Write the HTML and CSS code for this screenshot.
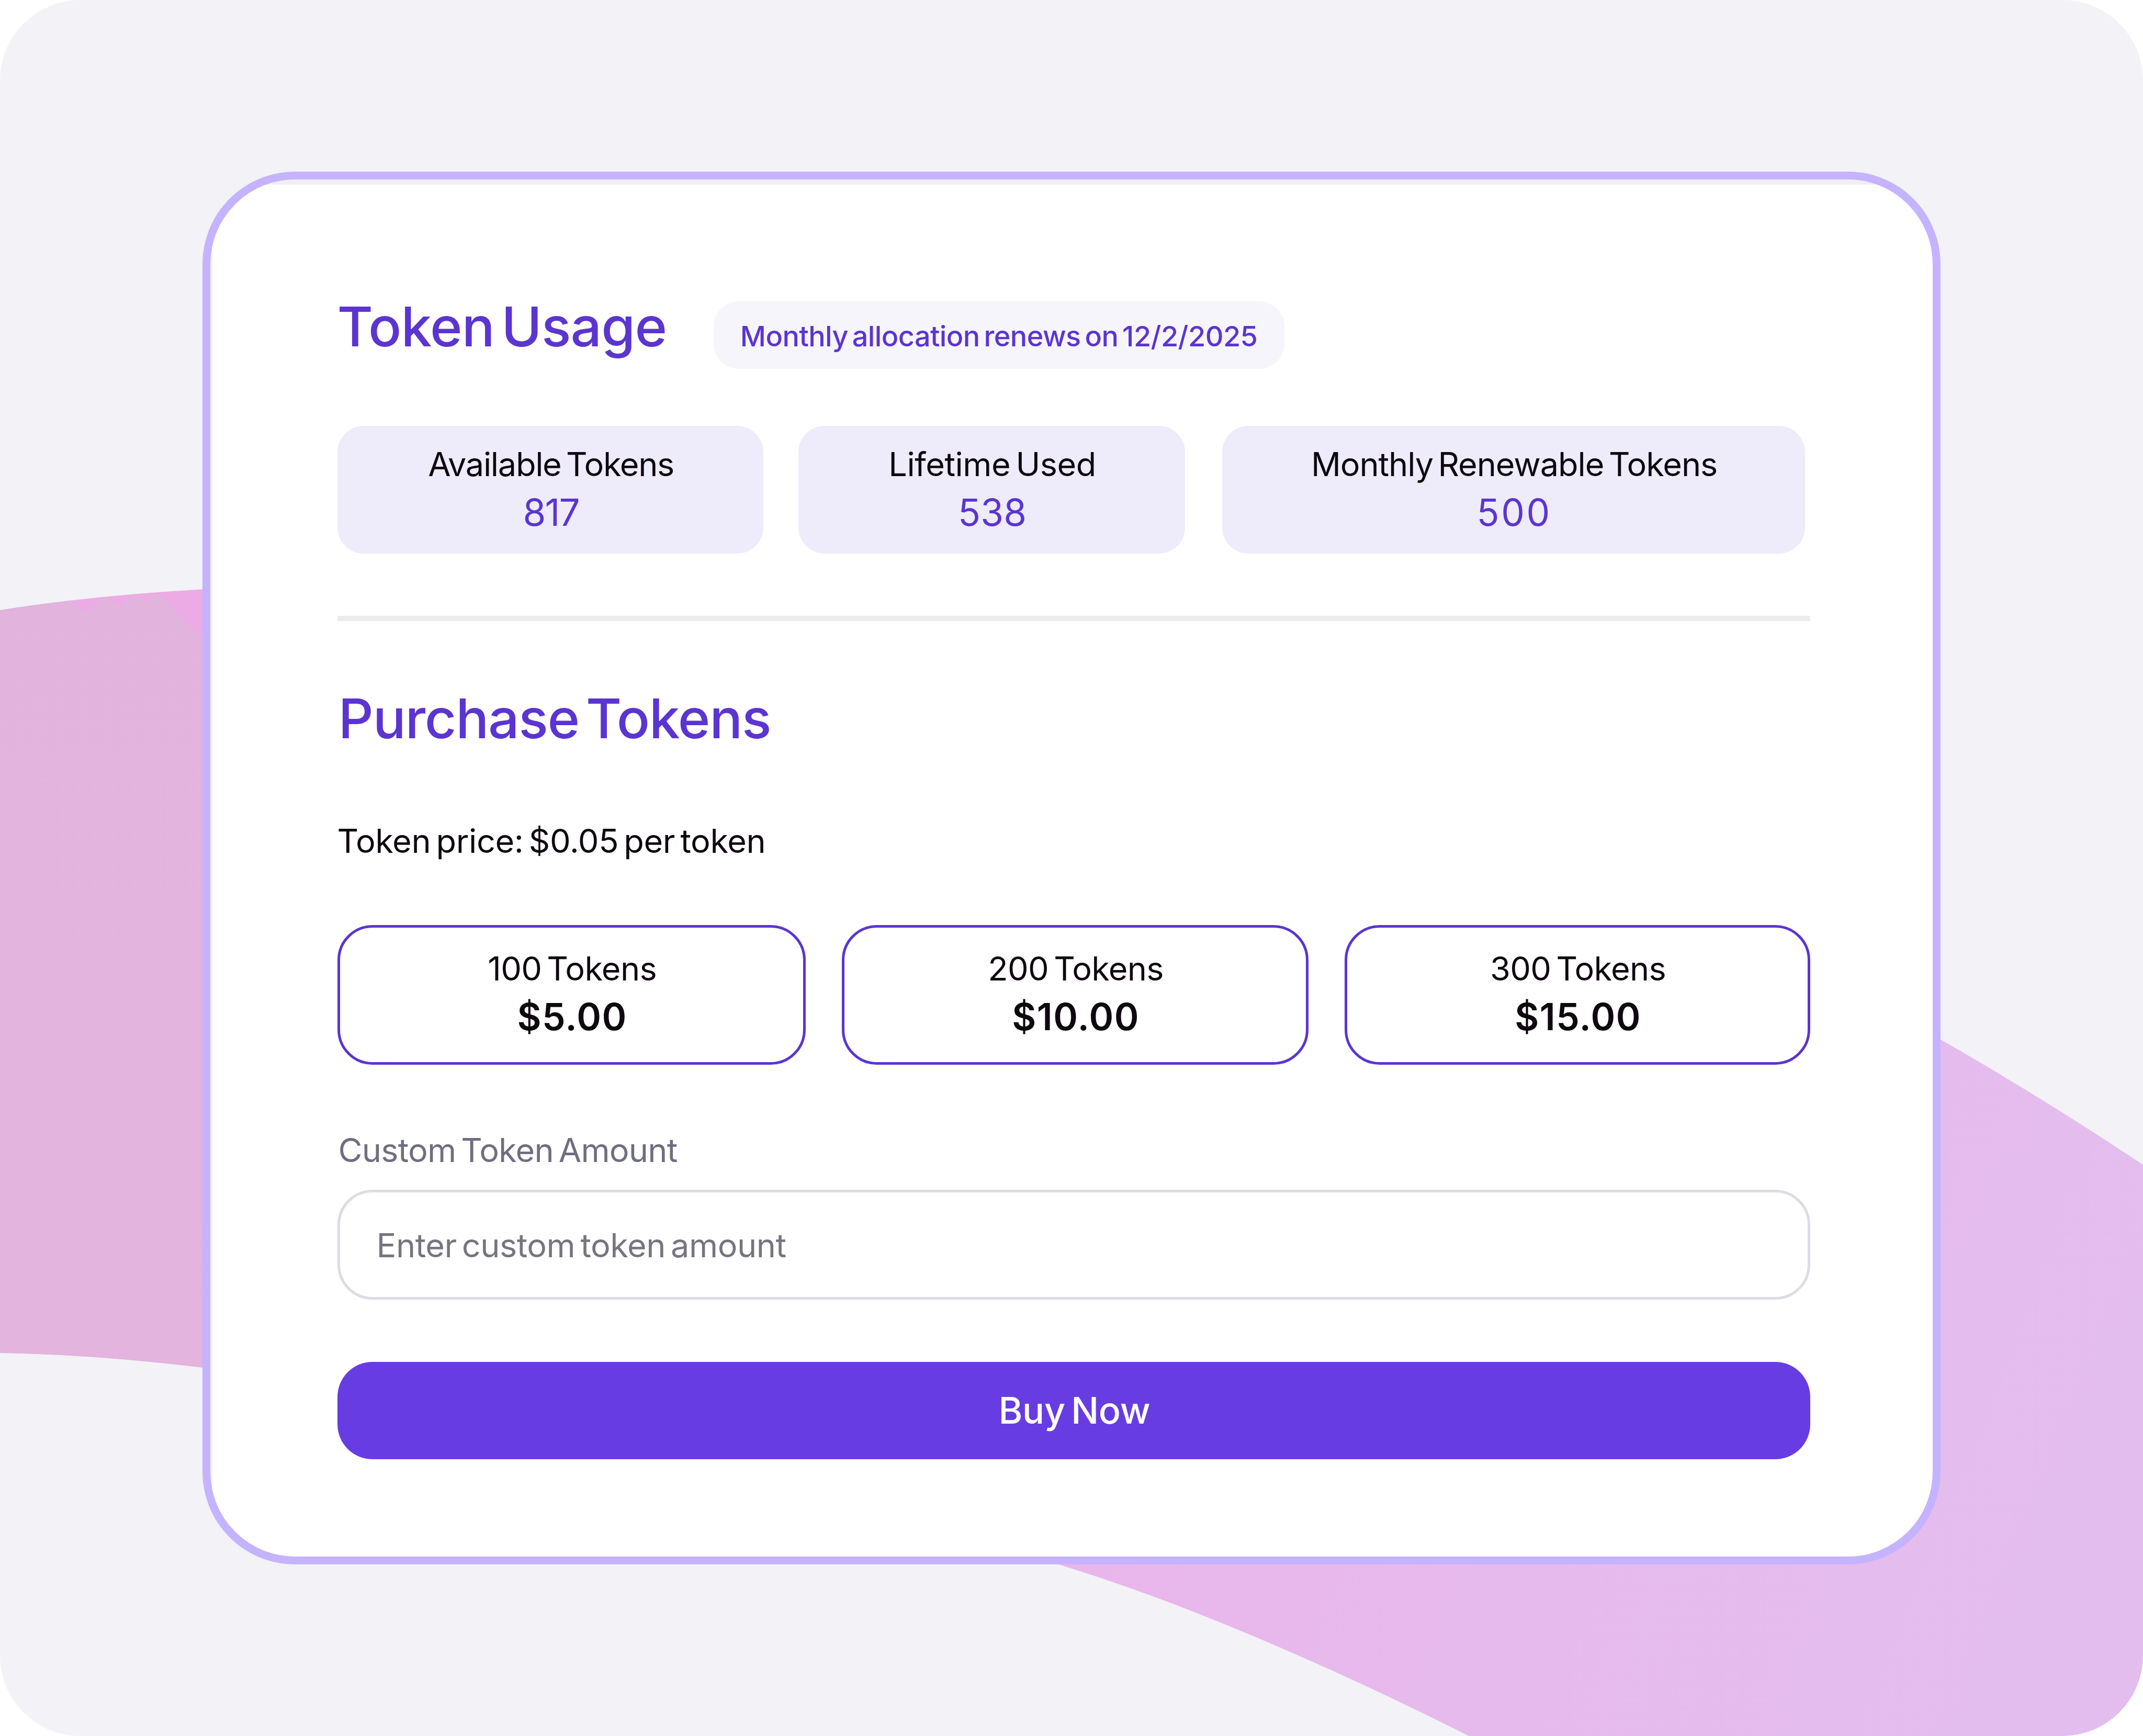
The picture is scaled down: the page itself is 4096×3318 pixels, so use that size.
FILE: index.html
```html
<!DOCTYPE html>
<html lang="en">
<head>
    <meta charset="UTF-8">
    <meta name="viewport" content="width=device-width, initial-scale=1.0">
    <title>Token Usage</title>
    <link rel="stylesheet" href="styles.css">
</head>
<body>
    <div class="page">
        <svg class="backdrop" viewBox="0 0 6400 5184" preserveAspectRatio="none" aria-hidden="true">
            <defs>
                <linearGradient id="leftFill" x1="0" y1="0" x2="0" y2="1">
                    <stop offset="0" stop-color="#e1b3dd"/>
                    <stop offset="1" stop-color="#e3b4de"/>
                </linearGradient>
                <linearGradient id="rightFill" gradientUnits="userSpaceOnUse" x1="3500" y1="4000" x2="6000" y2="5000">
                    <stop offset="0" stop-color="#e9b6ea"/>
                    <stop offset="0.5" stop-color="#e6baec"/>
                    <stop offset="1" stop-color="#e4bdef"/>
                </linearGradient>
            </defs>
            <path fill="#ecabe4" d="M0 1822 Q300 1775 640 1758 V4088 Q300 4045 0 4040 Z"/>
            <path fill="url(#leftFill)" d="M0 1822 Q100 1806 215 1793 Q240 1825 262 1824 C285 1815 295 1785 320 1784 C335 1785 345 1812 358 1812 C375 1808 385 1778 405 1777 C415 1778 423 1798 432 1798 C445 1792 450 1774 465 1773 C505 1780 550 1870 604 1900 L640 1930 V4088 Q300 4045 0 4040 Z"/>
            <path fill="url(#rightFill)" d="M5780 3095 Q6100 3278 6400 3478 V5184 H4387 Q3680 4830 3163 4672 L3100 4600 L5700 4600 Z"/>
        </svg>

        <main class="card">
            <div class="usage-header">
                <h1>Token Usage</h1>
                <span class="renew-badge">Monthly allocation renews on 12/2/2025</span>
            </div>

            <div class="stats">
                <div class="stat">
                    <div class="label available">Available Tokens</div>
                    <div class="value narrow">817</div>
                </div>
                <div class="stat">
                    <div class="label lifetime">Lifetime Used</div>
                    <div class="value">538</div>
                </div>
                <div class="stat">
                    <div class="label monthly">Monthly Renewable Tokens</div>
                    <div class="value wide">500</div>
                </div>
            </div>

            <hr>

            <h2>Purchase Tokens</h2>
            <p class="token-price">Token price: $0.05 per token</p>

            <div class="options">
                <button class="option">
                    <span class="label">100 Tokens</span>
                    <span class="price">$5.00</span>
                </button>
                <button class="option">
                    <span class="label">200 Tokens</span>
                    <span class="price">$10.00</span>
                </button>
                <button class="option">
                    <span class="label">300 Tokens</span>
                    <span class="price">$15.00</span>
                </button>
            </div>

            <label class="custom-label" for="customAmount">Custom Token Amount</label>
            <input type="text" id="customAmount" placeholder="Enter custom token amount">
            <button class="btn-buy">Buy Now</button>
        </main>
    </div>
</body>
</html>
```
FILE: styles.css
```css
* {
    box-sizing: border-box;
}
body {
    margin: 0;
    background-color: #ffffff;
    font-family: Inter, sans-serif;
    font-size: 63px;
    line-height: 92px;
    color: #0e080f;
}
.page {
    position: relative;
    width: 4096px;
    height: 3318px;
    padding: 328px 0 0 386.6px;
    background-color: #f2f2f7;
    border-radius: 154px;
    overflow: hidden;
}
.backdrop {
    position: absolute;
    top: 0;
    left: 0;
    width: 100%;
    height: 100%;
}
.card {
    position: relative;
    display: flex;
    flex-direction: column;
    width: 3322.7px;
    height: 2662px;
    padding: 233px 234px 0 243px;
    background-color: #ffffff;
    /* thin grey edge along the top and left */
    background-image: linear-gradient(#f0eff4, #f0eff4), linear-gradient(#f0eff4, #f0eff4);
    background-size: 100% 10px, 4px 100%;
    background-repeat: no-repeat;
    border: 15.4px solid #c5b3ff;
    border-radius: 177px;
}
h1, h2 {
    margin: 0;
    font-size: 105px;
    font-weight: 500;
    line-height: 96px;
    word-spacing: -14px;
    color: #5b35d0;
}
h1 {
    width: 719px;
    letter-spacing: -0.9px;
}
h2 {
    margin-top: 138px;
    padding-left: 2px;
    letter-spacing: -1.3px;
}
.usage-header {
    display: flex;
    align-items: flex-start;
}
.renew-badge {
    width: 1091px;
    height: 129px;
    border-radius: 48px;
    background-color: #f6f5fc;
    color: #5b35d0;
    font-size: 54px;
    font-weight: 500;
    line-height: 134px;
    letter-spacing: -0.6px;
    word-spacing: -6px;
    text-align: center;
    white-space: nowrap;
}
.stats {
    display: grid;
    grid-template-columns: 814px 739px 1114px;
    gap: 67px;
    margin-top: 109px;
}
.stat {
    height: 244px;
    padding: 27px 0 0 3px;
    border-radius: 50px;
    background-color: #eeebfa;
    text-align: center;
}
.stat:last-child {
    position: relative;
    left: 4px;
}
.label {
    display: block;
    letter-spacing: -0.7px;
    word-spacing: -7px;
}
.label.available {
    letter-spacing: -1.3px;
}
.label.lifetime {
    letter-spacing: -0.5px;
}
.label.monthly {
    letter-spacing: -1.1px;
}
.value {
    font-size: 71px;
    color: #5b35d0;
}
.value.narrow {
    letter-spacing: -2px;
}
.value.wide {
    letter-spacing: 3.5px;
}
hr {
    width: 100%;
    height: 10px;
    margin: 119px 0 0;
    border: none;
    background-color: #ececee;
}
.token-price {
    margin: 140px 0 0;
    letter-spacing: -0.4px;
    word-spacing: -7px;
}
.options {
    display: grid;
    grid-template-columns: 895px 892px 890px;
    gap: 69px;
    margin-top: 115px;
}
.option {
    display: flex;
    flex-direction: column;
    height: 267px;
    padding: 32px 0 0 3px;
    border: 5px solid #5b35d0;
    border-radius: 67px;
    background-color: #ffffff;
    color: inherit;
    font: inherit;
    text-align: center;
}
.option span {
    width: 100%;
}
.price {
    font-size: 71px;
    font-weight: 600;
    letter-spacing: 1.4px;
}
.custom-label {
    margin-top: 117px;
    padding-left: 2px;
    color: #6e6e80;
    letter-spacing: -0.8px;
    word-spacing: -7px;
}
#customAmount {
    height: 210px;
    margin-top: 30px;
    padding: 2px 70px 0;
    border: 5px solid #dddce3;
    border-radius: 67px;
    background-color: #ffffff;
    font: inherit;
    letter-spacing: -0.5px;
    word-spacing: -7px;
}
#customAmount::placeholder {
    color: #76757f;
}
.btn-buy {
    height: 186px;
    margin-top: 119px;
    padding: 0 0 0 2px;
    border: none;
    border-radius: 67px;
    background-color: #673de3;
    color: #ffffff;
    font: inherit;
    font-size: 70px;
    font-weight: 500;
    letter-spacing: -0.3px;
    word-spacing: -7px;
}
```
